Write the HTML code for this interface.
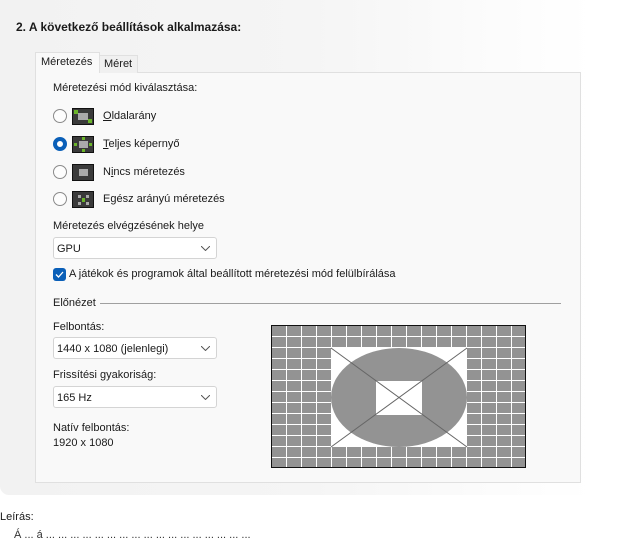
<!DOCTYPE html>
<html><head><meta charset="utf-8"><style>
*{margin:0;padding:0;box-sizing:border-box}
body{width:625px;height:531px;overflow:hidden;background:#fff;font-family:"Liberation Sans",sans-serif;font-size:11px;color:#1a1a1a;position:relative}
.bg{position:absolute;left:0;top:0;width:625px;height:495px;border-bottom-left-radius:9px;background:linear-gradient(90deg,#f2f2f2 0%,#f5f5f5 50%,#fcfcfc 80%,#fff 95%)}
.a{position:absolute;white-space:nowrap}
.panel{position:absolute;left:35px;top:72px;width:546px;height:411px;background:#f9f9f9;border:1px solid #e0e0e0}
.tab{position:absolute;border:1px solid #e0e0e0;border-bottom:none}
.radio{position:absolute;left:53px;width:14px;height:14px;border-radius:50%;border:1px solid #8a8a8a;background:#fdfdfd}
.radio.on{border:4px solid #0a5fb8;background:#fff}
.ico{position:absolute;left:72px;width:22px;height:17px;background:#3a3a3a;border:1px solid #111}
.dd{position:absolute;left:53px;width:164px;height:22px;background:#fff;border:1px solid #d4d4d4;border-radius:3px;padding:5px 0 0 3px}
.dd svg{position:absolute;right:6px;top:8px}
</style></head><body>
<div class="bg"></div>
<div class="a" style="left:16px;top:20px;font-weight:bold;font-size:12px">2. A következő beállítások alkalmazása:</div>
<div class="panel"></div>
<div class="tab" style="left:99px;top:55px;width:39px;height:18px;background:#f0f0f0"></div>
<div class="a" style="left:104px;top:58px">Méret</div>
<div class="tab" style="left:35px;top:52px;width:65px;height:21px;background:#f9f9f9"></div>
<div class="a" style="left:41px;top:56px">Méretezés</div>
<div class="a" style="left:53px;top:82px">Méretezési mód kiválasztása:</div>

<div class="radio" style="top:109px"></div>
<div class="ico" style="top:108px"><div style="position:absolute;left:5px;top:4px;width:10px;height:7px;background:#aaa"></div><div style="position:absolute;left:1px;top:1px;width:4px;height:4px;background:#6bb52a"></div><div style="position:absolute;right:1px;bottom:1px;width:4px;height:4px;background:#6bb52a"></div></div>
<div class="a" style="left:103px;top:110px"><u>O</u>ldalarány</div>

<div class="radio on" style="top:137px"></div>
<div class="ico" style="top:136px"><div style="position:absolute;left:6px;top:4px;width:9px;height:7px;background:#aaa"></div><div style="position:absolute;left:9px;top:0;width:3px;height:3px;background:#6bb52a"></div><div style="position:absolute;left:9px;bottom:0;width:3px;height:3px;background:#6bb52a"></div><div style="position:absolute;left:1px;top:6px;width:3px;height:3px;background:#6bb52a"></div><div style="position:absolute;right:1px;top:6px;width:3px;height:3px;background:#6bb52a"></div></div>
<div class="a" style="left:103px;top:138px"><u>T</u>eljes képernyő</div>

<div class="radio" style="top:165px"></div>
<div class="ico" style="top:164px"><div style="position:absolute;left:6px;top:4px;width:9px;height:7px;background:#aaa"></div></div>
<div class="a" style="left:103px;top:166px">N<u>i</u>ncs méretezés</div>

<div class="radio" style="top:192px"></div>
<div class="ico" style="top:191px"><div style="position:absolute;left:5px;top:3px;width:3px;height:3px;background:#aaa"></div><div style="position:absolute;left:13px;top:3px;width:3px;height:3px;background:#aaa"></div><div style="position:absolute;left:5px;top:10px;width:3px;height:3px;background:#aaa"></div><div style="position:absolute;left:13px;top:10px;width:3px;height:3px;background:#aaa"></div><div style="position:absolute;left:9px;top:6px;width:3px;height:4px;background:#6bb52a"></div></div>
<div class="a" style="left:103px;top:193px">E<u>g</u>ész arányú méretezés</div>

<div class="a" style="left:53px;top:220px">Méretezés elvégzésének helye</div>
<div class="dd" style="top:237px">GPU<svg width="9" height="5"><path d="M0 0L4.5 4.5L9 0" fill="none" stroke="#555"/></svg></div>
<div style="position:absolute;left:53px;top:268px;width:13px;height:13px;background:#0a5fb8;border-radius:3px"><svg width="13" height="13" style="position:absolute;left:0;top:0"><path d="M3 6.5L5.5 9L10 4" fill="none" stroke="#fff" stroke-width="1.3"/></svg></div>
<div class="a" style="left:69px;top:268px">A játékok és programok által beállított méretezési mód felülbírálása</div>

<div class="a" style="left:53px;top:297px">Előnézet</div>
<div style="position:absolute;left:100px;top:303px;width:461px;height:1px;background:#a0a0a0"></div>
<div class="a" style="left:53px;top:321px">Felbontás:</div>
<div class="dd" style="top:337px">1440 x 1080 (jelenlegi)<svg width="9" height="5"><path d="M0 0L4.5 4.5L9 0" fill="none" stroke="#555"/></svg></div>
<div class="a" style="left:53px;top:369px">Frissítési gyakoriság:</div>
<div class="dd" style="top:386px">165 Hz<svg width="9" height="5"><path d="M0 0L4.5 4.5L9 0" fill="none" stroke="#555"/></svg></div>
<div class="a" style="left:53px;top:422px">Natív felbontás:</div>
<div class="a" style="left:53px;top:437px">1920 x 1080</div>

<svg style="position:absolute;left:271px;top:325px" width="256" height="144">
<defs><pattern id="g" x="1" y="1" width="15" height="11" patternUnits="userSpaceOnUse"><rect width="15" height="11" fill="#fff"/><rect width="14" height="10" fill="#939393"/></pattern></defs>
<rect x="0.5" y="0.5" width="254" height="142" fill="url(#g)" stroke="#111"/>
<rect x="60" y="23" width="136" height="99" fill="#fff"/>
<ellipse cx="128" cy="72.5" rx="68" ry="49.5" fill="#939393"/>
<rect x="105" y="56" width="46" height="34" fill="#fff"/>
<path d="M60 23L196 122M196 23L60 122" stroke="#666" stroke-width="1"/>
</svg>

<div class="a" style="left:0;top:511px">Leírás:</div>
<div class="a" style="left:14px;top:529px;color:#333">Á  ...  á    ...   ...   ...  ...  ...   ...   ...   ...   ...   ...   ...   ...   ...   ...   ...   ...   ...</div>
</body></html>
